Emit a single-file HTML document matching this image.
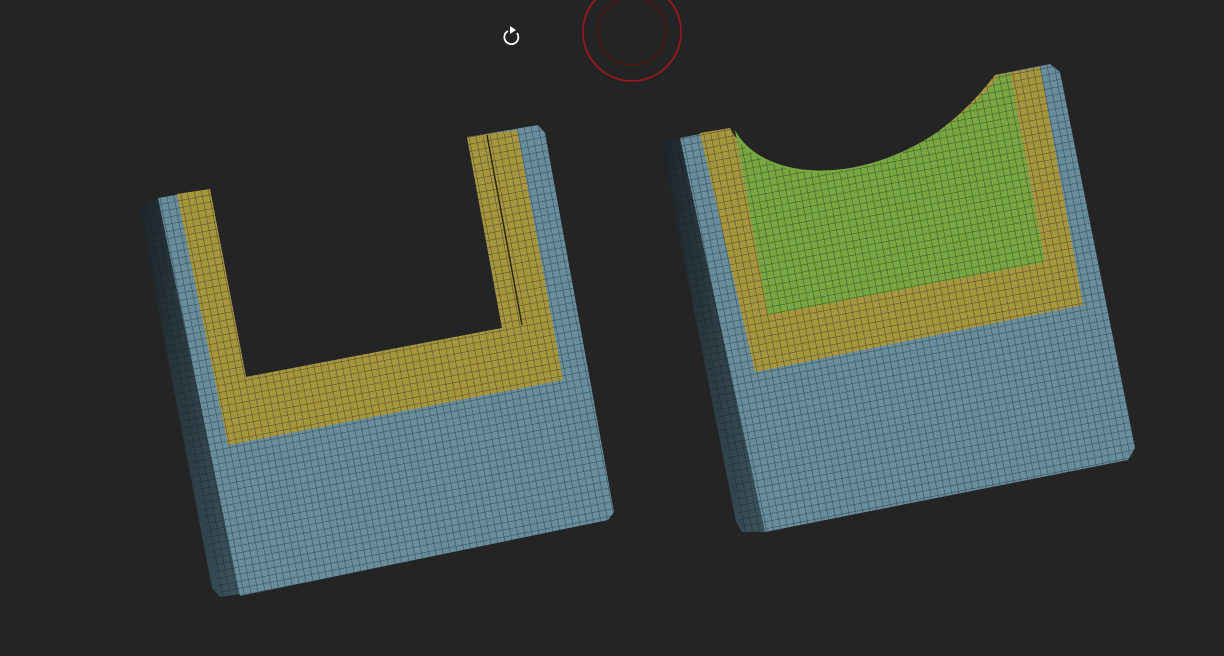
<!DOCTYPE html>
<html><head><meta charset="utf-8"><style>
html,body{margin:0;padding:0;background:#242424;width:1224px;height:656px;overflow:hidden}
svg{display:block}
</style></head><body>
<svg width="1224" height="656" viewBox="0 0 1224 656" xmlns="http://www.w3.org/2000/svg">
<defs>
<pattern id="g" width="7" height="7" patternUnits="userSpaceOnUse" patternTransform="rotate(-11)">
<path d="M0 0H7M0 0V7" stroke="#141a1c" stroke-opacity="0.6" stroke-width="1" fill="none"/>
</pattern>
<linearGradient id="side" x1="0" x2="1" y1="0" y2="0">
<stop offset="0" stop-color="#1c2529"/><stop offset="1" stop-color="#3d5560"/>
</linearGradient>
</defs>
<rect width="1224" height="656" fill="#242424"/>

<!-- LEFT OBJECT -->
<g>
<polygon points="140,212 146,203 160,198 240,594 220,597 212,588" fill="url(#side)"/>
<path d="M158,198 L210,189 L246,377 L502,328 L467,137 L538,125 L545,133 L614,512 L608,520 L240,596 Z" fill="#688d9c"/>
<path d="M177,194 L210,189 L246,377 L502,328 L467,137 L517,130 L563,380 L228,445 Z" fill="#a8963f"/>
<path d="M140,212 L146,203 L158,198 L210,189 L246,377 L502,328 L467,137 L538,125 L545,133 L614,512 L608,520 L240,596 L220,597 Z" fill="url(#g)"/>
<line x1="487" y1="135" x2="522" y2="325" stroke="#2a2a10" stroke-width="1.5"/>
</g>

<!-- RIGHT OBJECT -->
<g>
<polygon points="662,148 668,140 682,138 765,532 742,532 736,522" fill="url(#side)"/>
<path d="M680,138 L730,128 C760,190 900,200 995,75 L1050,64 L1060,72 L1135,448 L1128,460 L765,532 Z" fill="#688d9c"/>
<path d="M700,133 L730,128 C760,190 900,200 995,75 L1040,67 L1083,305 L755,372 Z" fill="#a8963f"/>
<path d="M735,130 C765,188 900,195 1000,75 L1010,73 L1045,262 L768,315 Z" fill="#78a640"/>
<path d="M662,148 L668,140 L680,138 L730,128 C760,190 900,200 995,75 L1050,64 L1060,72 L1135,448 L1128,460 L765,532 L742,532 Z" fill="url(#g)"/>
</g>

<!-- UI overlays -->
<circle cx="632" cy="32" r="49" fill="none" stroke="#b0141a" stroke-width="1.5"/>
<circle cx="632" cy="31" r="34" fill="none" stroke="#5a1414" stroke-width="1.2"/>
<path d="M508,31 A7,7 0 1 0 517,33" fill="none" stroke="#fff" stroke-width="1.8"/>
<polygon points="510,26 516,30 510,34" fill="#fff"/>
</svg>
</body></html>
